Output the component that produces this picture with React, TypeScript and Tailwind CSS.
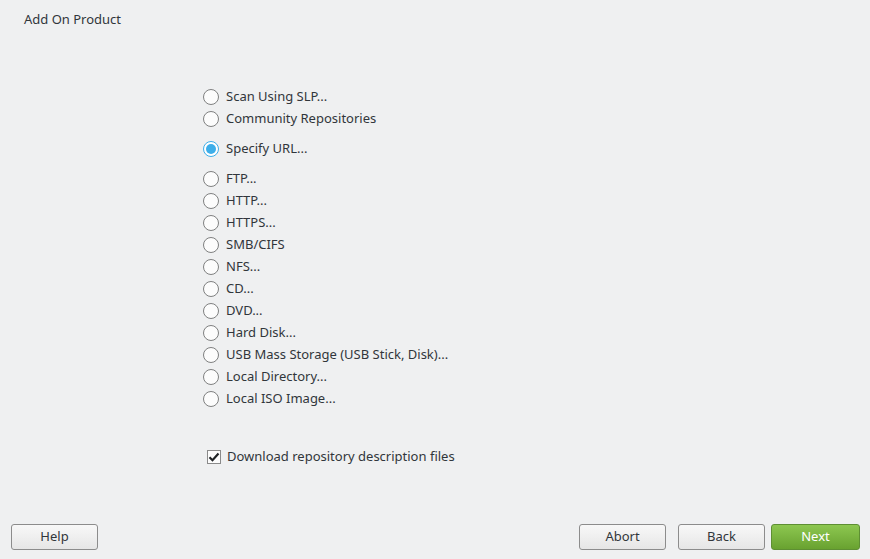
import React from "react";

const groupA = ["Scan Using SLP...", "Community Repositories"];
const groupB = [
  "FTP...",
  "HTTP...",
  "HTTPS...",
  "SMB/CIFS",
  "NFS...",
  "CD...",
  "DVD...",
  "Hard Disk...",
  "USB Mass Storage (USB Stick, Disk)...",
  "Local Directory...",
  "Local ISO Image...",
];

function Radio({ label, checked }: { label: string; checked?: boolean }) {
  return (
    <div className="h-[22px] flex items-center gap-[7px]">
      {checked ? (
        <span className="w-[16px] h-[16px] rounded-full border border-[#3daee9] bg-white flex items-center justify-center">
          <span className="w-[10px] h-[10px] rounded-full bg-[#3daee9]" />
        </span>
      ) : (
        <span className="w-[16px] h-[16px] rounded-full border border-[#7f8080] bg-[#fcfcfc]" />
      )}
      <span>{label}</span>
    </div>
  );
}

function Button({ label, primary, w = "w-[87px]" }: { label: string; primary?: boolean; w?: string }) {
  return (
    <button
      className={`${w} h-[26px] rounded-[3px] border text-[13px] ${
        primary
          ? "border-[#5e8f33] bg-gradient-to-b from-[#8dc750] to-[#69a230] text-white"
          : "border-[#8c8c8c] bg-gradient-to-b from-[#f8f8f8] to-[#e6e6e6] text-[#31363b]"
      }`}
    >
      {label}
    </button>
  );
}

export default function App() {
  return (
    <div className="w-[870px] h-[559px] bg-[#eff0f1] text-[#31363b] text-[13px] flex flex-col font-['Noto_Sans',sans-serif]">
      <div className="pl-[24px] pt-[10px] h-[28px] leading-[18px]">Add On Product</div>

      <div className="pl-[203px] pt-[58px] flex flex-col">
        {groupA.map((l) => (
          <Radio key={l} label={l} />
        ))}
        <div className="mt-[8px]">
          <Radio label="Specify URL..." checked />
        </div>
        <div className="mt-[8px] flex flex-col">
          {groupB.map((l) => (
            <Radio key={l} label={l} />
          ))}
        </div>

        <div className="mt-[36px] h-[22px] flex items-center gap-[6px] pl-[4px]">
          <span className="w-[14px] h-[14px] border border-[#8a8a8a] bg-[#fcfcfc] flex items-center justify-center">
            <svg width="12" height="12" viewBox="0 0 12 12">
              <path d="M1.5 6.2 L4.5 9.2 L10.5 2.5" fill="none" stroke="#1f2225" strokeWidth="2.2" />
            </svg>
          </span>
          <span>Download repository description files</span>
        </div>
      </div>

      <div className="mt-auto pb-[9px] pl-[11px] pr-[10px] flex items-center">
        <Button label="Help" />
        <div className="ml-auto flex items-center">
          <Button label="Abort" />
          <div className="ml-[12px]">
            <Button label="Back" />
          </div>
          <div className="ml-[6px]">
            <Button label="Next" primary w="w-[89px]" />
          </div>
        </div>
      </div>
    </div>
  );
}
